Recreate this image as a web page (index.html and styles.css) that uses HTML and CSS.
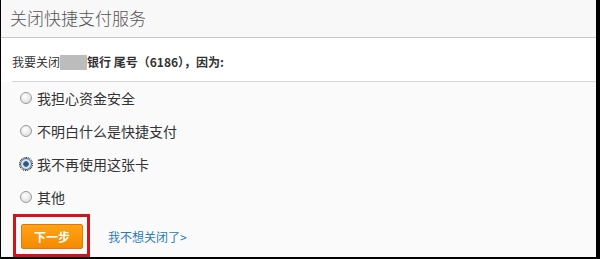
FILE: index.html
```html
<!DOCTYPE html>
<html>
  <head>
    <title>关闭快捷支付服务</title>
    <link rel="stylesheet" href="styles.css">
  </head>
  <body>
    <div class="frame">
      <div class="head">关闭快捷支付服务</div>
      <div class="intro">
        <div class="intro-text">我要关闭<span class="mask"></span><b>银行 尾号（6186），因为:</b></div>
      </div>
      <form class="reasons">
        <label class="row"><input type="radio" name="why" class="radio" />我担心资金安全</label>
        <label class="row"><input type="radio" name="why" class="radio" />不明白什么是快捷支付</label>
        <label class="row"><input type="radio" name="why" class="radio focus" checked />我不再使用这张卡</label>
        <label class="row"><input type="radio" name="why" class="radio" />其他</label>
        <div class="actions">
          <div class="mark"><input type="button" class="next" value="下一步" /></div>
          <a href="#" class="cancel">我不想关闭了&gt;</a>
        </div>
      </form>
    </div>
  </body>
</html>
```

FILE: styles.css
```css
html, body {margin: 0; height: 100%; background: #fafafa;}
body {font-family: "Noto Sans CJK SC", "DejaVu Sans", sans-serif; color: #333;}
.frame {height: 257px; border-left: 1px solid #000; border-right: 4px solid #000; border-bottom: 2px solid #000; background: #fafafa; overflow: hidden;}
.head {height: 37px; line-height: 36px; padding-left: 9px; font-size: 17px; font-weight: 300; color: #555; background: #f8f8f8; border-bottom: 1px solid #c8c8c8;}
.intro {background: #fff; padding-left: 11px;}
.intro-text {height: 43px; line-height: 47px; font-size: 12px; color: #333; border-bottom: 1px solid #d6d6d6;}
.mask {display: inline-block; width: 27px; height: 15px; background: #bcbcbc; vertical-align: -3px;}
.reasons {margin: 0; padding-left: 18px;}
.row {display: flex; align-items: center; height: 33px; margin-top: -1px; margin-bottom: 1px; font-size: 14px; color: #333;}
.radio {appearance: none; -webkit-appearance: none; width: 12px; height: 12px; margin: 0 5px 0 1px; border: 1px solid #9a9a9a; border-radius: 50%; background: radial-gradient(circle at 40% 35%, #fff 0, #e6e6e6 60%, #cfcfcf 100%);}
.radio:checked {background: radial-gradient(circle, #1d4f78 0, #2d6b9a 35%, #dfe7ee 45%, #c9c9c9 100%); border-color: #4a6a88;}
.focus {outline: 1px dotted #000; outline-offset: 0;}
.actions {display: flex; align-items: center; gap: 18px; margin-left: -6px;}
.mark {padding: 6px 4px 5px 5px; border: 3px solid #d0141a;}
.next {width: 62px; height: 25px; padding: 0; border: 1px solid #e07a00; border-radius: 2px; background: linear-gradient(#ffa318, #f58a00); color: #fff; font-family: inherit; font-size: 12px; font-weight: bold;}
.cancel {font-size: 12px; color: #2a7cb4; text-decoration: none; margin-top: 2px;}
```
